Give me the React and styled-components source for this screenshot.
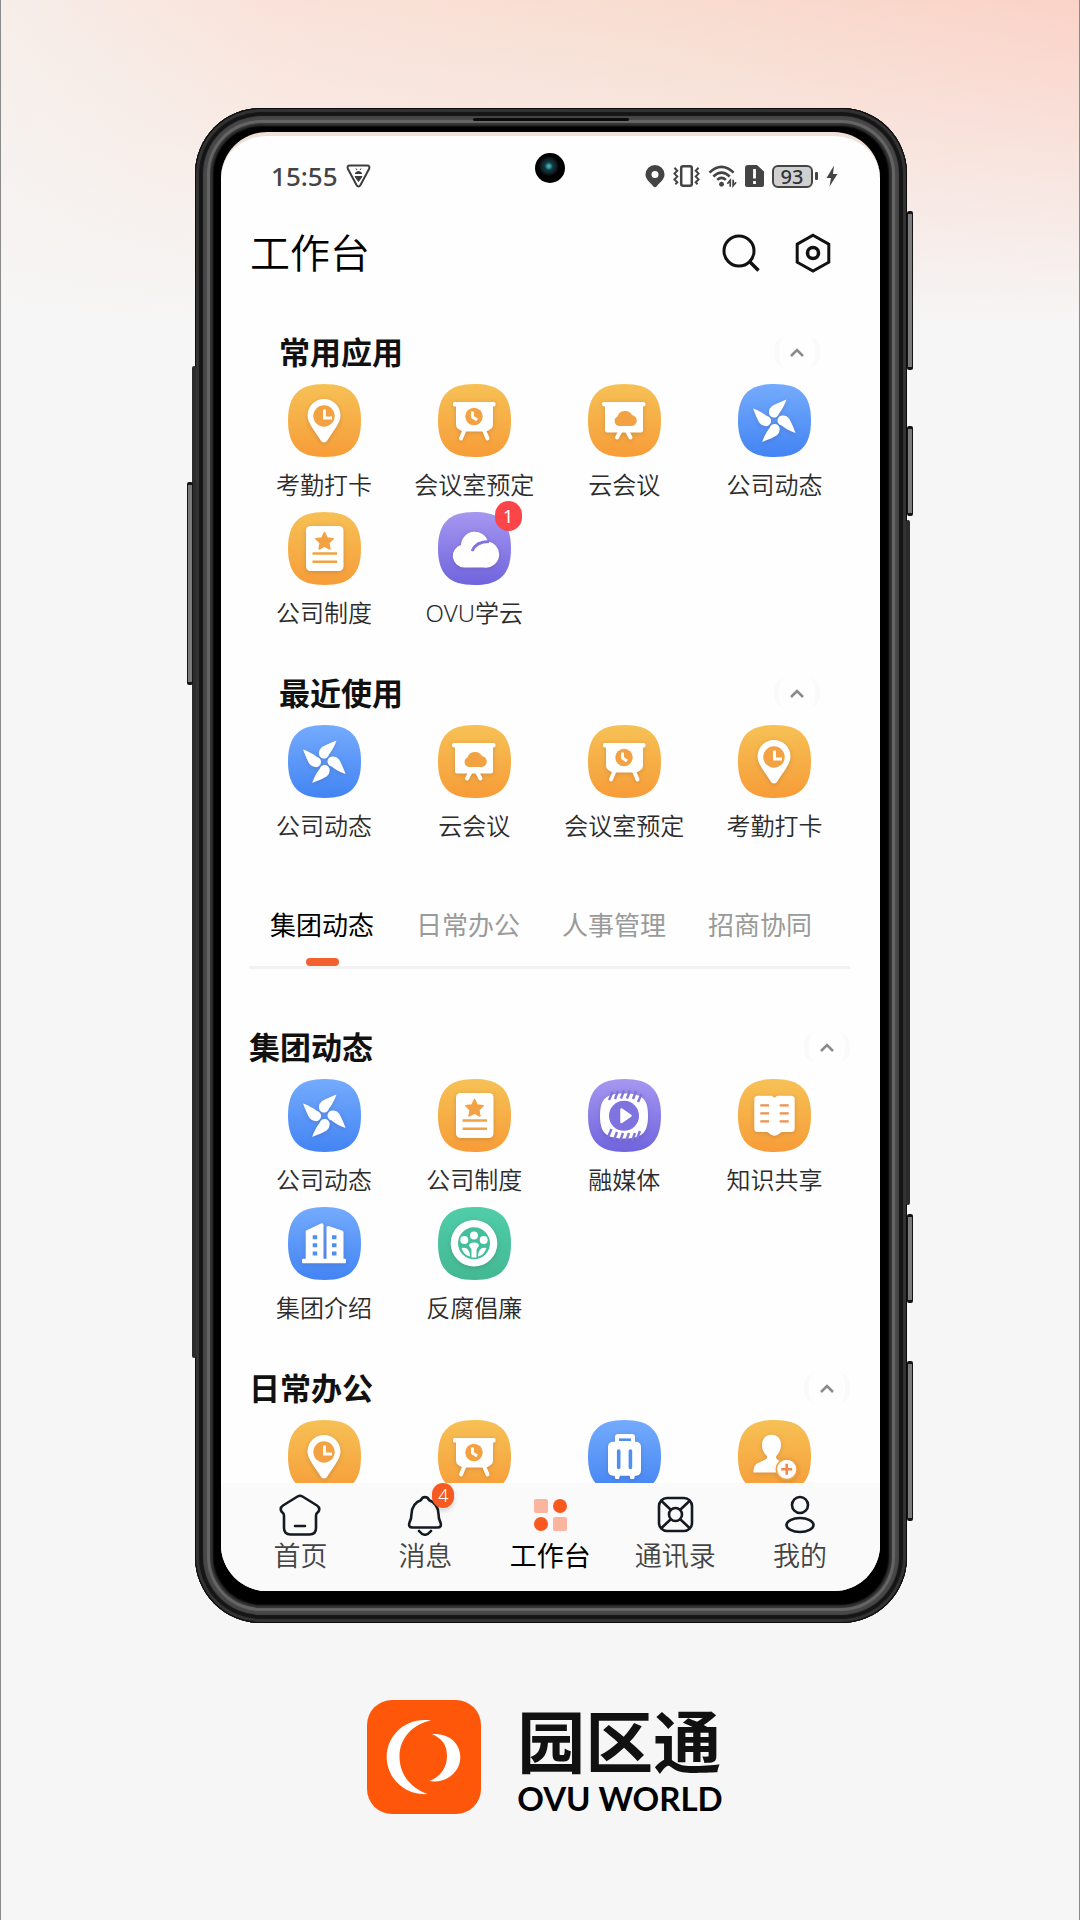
import React from 'react'
import styled, { createGlobalStyle } from 'styled-components'

const TILE_COLORS = {
  orange: ['#f6c155', '#f79c38'],
  blue: ['#74abfd', '#4384f3'],
  purple: ['#a697f0', '#6f64de'],
  green: ['#50cda9', '#43b892'],
}

// colour of the cut-outs inside a white glyph
const CUT_COLORS = {
  orange: '#f3a243',
  blue: '#4f8ff0',
  purple: '#7f73e0',
  green: '#45bf9b',
}

// glyphs are drawn on a 73 x 73 tile, c is the cut-out colour
const GLYPHS = {
  pin: (c) => (
    <>
      <path d="M36 15a16.500 16.500 0 0 0-16.500 16.500c0 8 8.500 17 13.500 25.500q3 3 6 0c5-8.500 13.500-17.500 13.500-25.500A16.500 16.500 0 0 0 36 15z" fill="#fff" />
      <circle cx="36" cy="32" r="10.700" fill={c} />
      <path d="M36.500 25.500V34H44" fill="none" stroke="#fff" strokeWidth="2.800" />
    </>
  ),
  easel: (c) => (
    <>
      <path d="M26.500 46l-3.500 8.500M46 46l3.500 8.500" stroke="#fff" strokeWidth="4" strokeLinecap="round" />
      <rect x="15" y="18" width="42.500" height="4.500" rx="1.500" fill="#fff" />
      <path d="M18 20h37v20q0 4-3 5.500q-2 2-6 2H27q-4 0-6-2q-3-1.500-3-5.500z" fill="#fff" />
      <circle cx="36" cy="32.500" r="8.700" fill={c} />
      <path d="M34.500 27.500v5.500l4.500 3" fill="none" stroke="#fff" strokeWidth="3" />
    </>
  ),
  board: (c) => (
    <>
      <path d="M32.500 47l-3.500 6.500M39 47l3.500 6.500" stroke="#fff" strokeWidth="4" strokeLinecap="round" />
      <rect x="14" y="18" width="43.500" height="4.500" rx="2" fill="#fff" />
      <rect x="17" y="20" width="38" height="28.500" rx="2" fill="#fff" />
      <path d="M31 42a5 5 0 0 1-1.500-9.500a8 8 0 0 1 14.500-1.500a5.500 5.500 0 0 1-1.500 11z" fill={c} />
    </>
  ),
  pinwheel: () => (
    <>
      {[0, 90, 180, 270].map((deg) => (
        <path
          key={deg}
          d="M48.500 15.500Q38 19.500 34 22Q31 24.500 31 27.500A5 5 0 0 0 41 29.500Q45.500 24 48.500 15.500z"
          transform={`rotate(${deg} 36.300 36.800)`}
          fill="#fff"
        />
      ))}
    </>
  ),
  document: (c) => (
    <>
      <rect x="18" y="14" width="37.500" height="45" rx="4.500" fill="#fff" />
      <path
        d="M36.500 20.500l2.700 5.500l6 .8l-4.400 4.200l1.100 6l-5.400-2.900l-5.400 2.900l1.100-6l-4.400-4.200l6-.8z"
        fill={c}
        stroke={c}
        strokeWidth="1.500"
        strokeLinejoin="round"
      />
      <path d="M24.500 41.500H49M24.500 49.700H49" stroke={c} strokeWidth="2.400" />
    </>
  ),
  cloud: (c) => (
    <>
      <path d="M26 55.500a11.500 11.500 0 0 1-3-22.500a13.800 13.800 0 0 1 27-3.500a13 13 0 0 1-4 26z" fill="#fff" />
      <path d="M34 39q4-9.500 17-9.500" fill="none" stroke={c} strokeWidth="2.800" />
    </>
  ),
  film: (c) => (
    <>
      <path d="M36 14.500c18 0 24 5 24 22.300S54 59.500 36 59.500S12 54 12 36.800S18 14.500 36 14.500z" fill="#fff" />
      <path
        d="M21 21l3.500-8M27 20l3-8M33 19.500l3-8M39 19.500l3-8M45 20l3-8M50 23l3.500-8M20 58l3.500-8M26 61l3-8M32 62l3-8M38 62l3-8M44 62l3-8M49 60l3-8"
        stroke={c}
        strokeWidth="2.400"
      />
      <circle cx="36" cy="36.800" r="15" fill={c} />
      <path d="M33.500 30.500v12.500l9-6.200z" fill="#fff" stroke="#fff" strokeWidth="2.500" strokeLinejoin="round" />
    </>
  ),
  book: () => (
    <>
      <path d="M20 16.700h13.500l3 2l3-2H53q3.700 0 3.700 3.500V49.500q0 3.500-3.700 3.500h-8.500q-2 0-3.500 2q-4.500 3.500-9 0q-1.500-2-3.500-2H20q-3.700 0-3.700-3.500V20.200q0-3.500 3.700-3.500z" fill="#fff" />
      <path d="M22.300 26.300H31M22.300 34.300H31M22.300 42.300H31M41.700 26.300h9M41.700 34.300h9M41.700 42.300h9" stroke="#f0904a" strokeWidth="2.300" />
    </>
  ),
  building: (c) => (
    <>
      <path d="M17.700 23.700L33 16.500q2.500-.8 2.500 1.500V54H17.700zM38.500 20.500q0-2 2-1.500L54 23.500q1.500.5 1.500 2V54h-17z" fill="#fff" />
      <rect x="14" y="51.700" width="44" height="4.500" rx="1" fill="#fff" />
      <path d="M24.700 28.300h4.500v4h-4.500zM24.700 36.300h4.500v4h-4.500zM24.700 44.500h4.500v4h-4.500zM44 28.300h4.500v4H44zM44 36.300h4.500v4H44zM44 44.500h4.500v4H44z" fill={c} />
    </>
  ),
  people: (c) => (
    <>
      <circle cx="36" cy="36.300" r="23.300" fill="#fff" />
      <circle cx="36" cy="36.300" r="16" fill={c} />
      <circle cx="36" cy="28.500" r="4" fill="#fff" />
      <circle cx="26.300" cy="33" r="4" fill="#fff" />
      <circle cx="45.700" cy="33" r="4" fill="#fff" />
      <path d="M36 35.500q4.500 0 5 3l-2.500 4V50.500h-5V42.500L31 38.500q.5-3 5-3z" fill="#fff" />
      <path d="M23.500 41q8-2 8.500 8.500q-6-1-8.500-8.500zM48.500 41q-8-2-8.500 8.500q6-1 8.500-8.500z" fill="#fff" />
    </>
  ),
  luggage: (c) => (
    <>
      <rect x="27" y="14" width="20" height="14" rx="3" fill="#fff" />
      <path d="M31 19.700h12" stroke={c} strokeWidth="2.600" />
      <rect x="20" y="21.700" width="33" height="34" rx="5" fill="#fff" />
      <path d="M26 54h6.500l-1.500 5h-3.500zM41 54h6.500L46 59h-3.500z" fill="#fff" />
      <path d="M30.700 31v16.500M42.400 31v16.500" stroke={c} strokeWidth="3.600" strokeLinecap="round" />
    </>
  ),
  invite: (c) => (
    <>
      <path d="M33.500 14.800c7 0 10 5 9.500 11.500c-.4 4.500-2.500 7.500-4.500 9.500q-1.500 3 2 4.500l6 3V52.500H15.500q-.5-7 4.500-9.500l7.500-3.500q2.500-1.500 1-4c-2.500-2-4.300-5.500-4.500-9.200c-.4-6.500 3-11.500 9.500-11.500z" fill="#fff" />
      <circle cx="48.700" cy="49.300" r="11.200" fill={c} />
      <circle cx="48.700" cy="49.300" r="9.500" fill="#fff" />
      <path d="M43.200 49.300h11M48.700 43.800v11" stroke="#f5874a" strokeWidth="2.600" />
    </>
  ),
}

const clockIn = { label: '考勤打卡', glyph: 'pin', tone: 'orange' }
const room = { label: '会议室预定', glyph: 'easel', tone: 'orange' }
const meeting = { label: '云会议', glyph: 'board', tone: 'orange' }
const news = { label: '公司动态', glyph: 'pinwheel', tone: 'blue' }
const rules = { label: '公司制度', glyph: 'document', tone: 'orange' }
const learn = { label: 'OVU学云', glyph: 'cloud', tone: 'purple', badge: 1 }
const media = { label: '融媒体', glyph: 'film', tone: 'purple' }
const share = { label: '知识共享', glyph: 'book', tone: 'orange' }
const about = { label: '集团介绍', glyph: 'building', tone: 'blue' }
const honest = { label: '反腐倡廉', glyph: 'people', tone: 'green' }

// the last row runs under the nav bar, only its icons show
const DAILY = [
  { glyph: 'pin', tone: 'orange' },
  { glyph: 'easel', tone: 'orange' },
  { glyph: 'luggage', tone: 'blue' },
  { glyph: 'invite', tone: 'orange' },
]

const TABS = ['集团动态', '日常办公', '人事管理', '招商协同']

const NAV = [
  {
    label: '首页',
    icon: (
      <path d="M18.500 2.500q2.500-1.500 5 0L38 11.500q3 2 2 5q-.5 1.500-2 2.500q-1 1-1 3v12q0 6.500-6.500 6.500h-19Q5 40.500 5 34V22q0-2-1-3q-1.500-1-2-2.500q-1-3 2-5zM16 32h10" />
    ),
  },
  {
    label: '消息',
    badge: 4,
    icon: (
      <path d="M17 6a4.200 4.200 0 0 1 8 0q9 3.500 9.500 14q0 5 2 8.500q1.500 5-3 5h-25q-4.500 0-3-5q2-3.500 2-8.500Q8 9.500 17 6zM15 37q6 7.500 12 0" />
    ),
  },
  {
    label: '工作台',
    active: true,
    icon: (
      <g stroke="none">
        <rect x="5" y="5" width="14" height="14" rx="2" fill="#fbb59f" />
        <circle cx="31" cy="12" r="7" fill="#f9591f" />
        <circle cx="12" cy="30" r="7" fill="#f9591f" />
        <rect x="24" y="23" width="14" height="14" rx="2" fill="#fbb59f" />
      </g>
    ),
  },
  {
    label: '通讯录',
    icon: (
      <>
        <rect x="5" y="4" width="33" height="33" rx="8" />
        <circle cx="21.500" cy="20.500" r="6.500" />
        <path d="M7.500 7l9 8.500M35.500 7l-9 8.500M7.500 34l9-8.500M35.500 34l-9-8.500" />
      </>
    ),
  },
  {
    label: '我的',
    icon: (
      <>
        <circle cx="21" cy="11" r="8" />
        <ellipse cx="21" cy="31" rx="13.500" ry="7" />
      </>
    ),
  },
]

const AppIcon = ({ glyph, tone }) => {
  const [from, to] = TILE_COLORS[tone]
  return (
    <TileSvg viewBox="0 0 73 73" aria-hidden="true">
      <defs>
        <linearGradient id={`tile-${tone}`} x1="0" y1="0" x2="0" y2="1">
          <stop offset="0" stopColor={from} />
          <stop offset="1" stopColor={to} />
        </linearGradient>
      </defs>
      <path
        d="M36.500 0C62 0 73 11 73 36.500S62 73 36.500 73S0 62 0 36.500S11 0 36.500 0z"
        fill={`url(#tile-${tone})`}
      />
      <g>{GLYPHS[glyph](CUT_COLORS[tone])}</g>
    </TileSvg>
  )
}

const AppSection = ({ title, apps, inset }) => (
  <Section>
    <SectionHead $inset={inset}>
      <SectionTitle>{title}</SectionTitle>
      <CollapseButton aria-label={title}>
        <svg width="14" height="9" viewBox="0 0 14 9" fill="none" stroke="#8a8a8a" strokeWidth="2.500">
          <path d="M1 8l6-6l6 6" />
        </svg>
      </CollapseButton>
    </SectionHead>
    <AppGrid>
      {apps.map((app) => (
        <AppButton key={app.glyph}>
          <AppIconBox>
            <AppIcon glyph={app.glyph} tone={app.tone} />
            {app.badge && <AppBadge>{app.badge}</AppBadge>}
          </AppIconBox>
          {app.label && <AppLabel>{app.label}</AppLabel>}
        </AppButton>
      ))}
    </AppGrid>
  </Section>
)

const StatusIcons = () => (
  <StatusGroup>
    <svg width="20" height="24" viewBox="0 0 20 24" fill="#444">
      <path fillRule="evenodd" d="M10 1a9.500 9.500 0 0 0-9.500 9.500c0 5 4.500 7.500 7.500 11.500q2 2.500 4 0c3-4 7.500-6.500 7.500-11.500A9.500 9.500 0 0 0 10 1zM10 7a3.500 3.500 0 1 1 0 7a3.500 3.500 0 0 1 0-7z" />
    </svg>
    <svg width="27" height="24" viewBox="0 0 28 24" fill="none" stroke="#444" strokeWidth="2">
      <rect x="8.500" y="2" width="11" height="20" rx="2" strokeWidth="2.600" />
      <path d="M1.500 3.500l3 3l-3 3l3 3l-3 3l3 3l-2 2M26.500 3.500l-3 3l3 3l-3 3l3 3l-3 3l2 2" />
    </svg>
    <svg width="29" height="24" viewBox="0 0 30 24" fill="none" stroke="#444" strokeWidth="2.600">
      <path d="M1.500 8.500q12.500-12 25 0M5.500 12.500q8.500-8 17 0M9.500 16q4.500-4 9 0" />
      <circle cx="14" cy="20.500" r="2.500" fill="#444" stroke="none" />
      <path d="M20 20l3-3.500v6.500M26 16v6l3-3.500" strokeWidth="1.800" />
    </svg>
    <svg width="19" height="24" viewBox="0 0 19 24">
      <path d="M3 1h9l7 6.500V21q0 2-2 2H3q-3 0-3-2V4q0-3 3-3z" fill="#444" />
      <path d="M9.500 5v9.500M9.500 17v3" stroke="#fff" strokeWidth="2.800" />
    </svg>
    <Battery>
      <BatteryLevel>93</BatteryLevel>
      <BatteryTip />
    </Battery>
    <svg width="12" height="24" viewBox="0 0 12 24" fill="#444">
      <path d="M8 1.500L0.500 14H5L3.500 22.500L11.500 10H7z" />
    </svg>
  </StatusGroup>
)

const App = () => (
  <Page>
    <GlobalStyle />
    <PhoneWrap>
      <Phone>
        <SideBulge $side="left" $top="17%" $height="65.500%" />
        <SideBulge $side="right" $top="27.200%" $height="45.200%" />
        <SideKey $side="left" $top="24.700%" $height="13.400%" />
        <SideKey $side="right" $top="6.800%" $height="10.500%" />
        <SideKey $side="right" $top="21%" $height="5.900%" />
        <SideKey $side="right" $top="73%" $height="5.900%" />
        <SideKey $side="right" $top="82.700%" $height="10.600%" />
        <Earpiece />
        <Screen>
          <Camera />
          <StatusBar>
            <StatusGroup>
              <Clock>15:55</Clock>
              <svg width="25" height="24" viewBox="0 0 25 24" fill="none" stroke="#3c3c3c" strokeWidth="2">
                <path d="M4 1.500h17q3.500 0 2 3.500l-8.500 16q-2 3-4 0L2 5Q.5 1.500 4 1.500z" />
                <path d="M9 9.500q3.500-4 7 0zM9 12.500h7l-3.500 5zM10 4.500l1 1.500M15 4.500l-1 1.500" fill="#3c3c3c" strokeWidth="1" />
              </svg>
            </StatusGroup>
            <StatusIcons />
          </StatusBar>
          <Header>
            <PageTitle>工作台</PageTitle>
            <HeaderActions>
              <IconButton aria-label="搜索">
                <svg width="40" height="40" viewBox="0 0 40 40" fill="none" stroke="#111" strokeWidth="3">
                  <circle cx="18" cy="18" r="15" />
                  <path d="M28.500 28.500l9 9" strokeWidth="3.500" />
                </svg>
              </IconButton>
              <IconButton aria-label="设置">
                <svg width="40" height="40" viewBox="0 0 40 40" fill="none" stroke="#111" strokeWidth="3">
                  <path d="M20 2.200l15.800 9v18L20 38L4.200 29.200v-18z" />
                  <circle cx="20" cy="20" r="5.500" strokeWidth="3.500" />
                </svg>
              </IconButton>
            </HeaderActions>
          </Header>
          <Content>
            <AppSection inset title="常用应用" apps={[clockIn, room, meeting, news, rules, learn]} />
            <AppSection inset title="最近使用" apps={[news, meeting, room, clockIn]} />
            <TabBar>
              {TABS.map((tab, i) => (
                <Tab key={tab} $active={i === 0}>{tab}</Tab>
              ))}
            </TabBar>
            <AppSection title="集团动态" apps={[news, rules, media, share, about, honest]} />
            <AppSection title="日常办公" apps={DAILY} />
          </Content>
          <NavBar>
            {NAV.map((item) => (
              <NavButton key={item.label} $active={item.active}>
                <NavIconBox>
                  <svg width="42" height="42" viewBox="0 0 42 42" fill="none" stroke="#151a22" strokeWidth="2.600" strokeLinecap="round">
                    {item.icon}
                  </svg>
                  {item.badge && <NavBadge>{item.badge}</NavBadge>}
                </NavIconBox>
                {item.label}
              </NavButton>
            ))}
          </NavBar>
        </Screen>
      </Phone>
    </PhoneWrap>
    <Brand>
      <svg width="114" height="114" viewBox="0 0 114 114">
        <rect width="114" height="114" rx="25" fill="#ff570a" />
        <path d="M64 20.500C38 17 19.700 36 19.700 57S38 96 60.700 94C44 88 32.500 75 32.500 56.500S46 24 64 20.500z" fill="#fff" />
        <path d="M64.700 34C82 33 93.300 43 93.300 57.500S79 84 62.300 81C73 77 80 68 80 56S74 38 64.700 34z" fill="#fff" />
      </svg>
      <BrandText>
        <BrandName>园区通</BrandName>
        <BrandLatin>OVU WORLD</BrandLatin>
      </BrandText>
    </Brand>
  </Page>
)

export default App

const GlobalStyle = createGlobalStyle`
  * {
    box-sizing: border-box;
  }

  body {
    margin: 0;
    font-family: "Noto Sans", "Noto Sans CJK SC", sans-serif;
    color: #111;
  }

  button {
    border: 0;
    padding: 0;
    background: none;
    font: inherit;
    color: inherit;
  }

  svg {
    display: block;
    flex-shrink: 0;
  }
`;

const Page = styled.main`
  min-height: 100vh;
  display: flex;
  flex-direction: column;
  border: 0 solid #8a8a8a;
  border-width: 0 1px;
  padding-bottom: 40px;
  background:
    linear-gradient(to bottom, rgba(246, 246, 246, 0), #f6f6f6 330px),
    linear-gradient(to right, #f6eee9, #fae2d9 25%, #f8ddd0 60%, #fbd2c7);
`;

const PhoneWrap = styled.div`
  padding: 108px 16% 0 18%;
`;

const Phone = styled.div`
  position: relative;
  display: flex;
  aspect-ratio: 712 / 1516;
  padding: 24px 27px 32px 26px;
  border-radius: 66px;
  background: #000;
  box-shadow:
    inset 0 0 0 1px #0c0c0c,
    inset 0 0 1px 4px #333,
    inset 0 0 1px 8px #151515,
    inset 0 0 1px 12px #474747,
    inset 0 0 1px 15px #676767,
    inset 0 0 2px 18px #333;
`;

const SideBulge = styled.span`
  position: absolute;
  ${(p) => p.$side}: -3px;
  top: ${(p) => p.$top};
  width: 4px;
  height: ${(p) => p.$height};
  border-radius: 3px;
  background: #2b2b2b;
`;

const SideKey = styled.span`
  position: absolute;
  ${(p) => p.$side}: ${(p) => (p.$side === 'left' ? '-8px' : '-6px')};
  top: ${(p) => p.$top};
  width: 6px;
  height: ${(p) => p.$height};
  border: 1px solid #151515;
  border-width: 3px 1px;
  border-radius: 2px;
  background: #7b7b7b;
`;

const Earpiece = styled.span`
  position: absolute;
  top: 10px;
  left: 39%;
  right: 39%;
  height: 3px;
  border-radius: 2px;
  background: #0a0a0a;
`;

const Screen = styled.div`
  position: relative;
  flex: 1;
  min-width: 0;
  display: flex;
  flex-direction: column;
  overflow: hidden;
  border-radius: 46px;
  border-top: 4px solid #efe0d8;
  background: #fefefe;
`;

const Camera = styled.span`
  position: absolute;
  top: 17px;
  left: 50%;
  width: 30px;
  height: 30px;
  margin-left: -15px;
  border-radius: 50%;
  background: radial-gradient(circle at 46% 44%, #3fb0b8 0 1px, #123c44 4px, #101a20 8px, #000 10px);
`;

const StatusBar = styled.div`
  display: flex;
  justify-content: space-between;
  align-items: center;
  height: 84px;
  flex-shrink: 0;
  padding: 0 42px 4px 50px;
`;

const StatusGroup = styled.div`
  display: flex;
  align-items: center;
  gap: 8px;
`;

const Clock = styled.span`
  font-size: 26px;
  line-height: 30px;
  font-weight: 500;
  color: #444;
`;

const Battery = styled.span`
  display: flex;
  align-items: center;
  gap: 2px;
`;

const BatteryLevel = styled.span`
  width: 41px;
  height: 23px;
  border: 2px solid #444;
  border-radius: 6px;
  background: #d0d0d0;
  font-size: 20px;
  line-height: 19px;
  font-weight: 500;
  text-align: center;
  color: #333;
`;

const BatteryTip = styled.span`
  width: 3px;
  height: 8px;
  border-radius: 1px;
  background: #444;
`;

const Header = styled.header`
  display: flex;
  justify-content: space-between;
  align-items: center;
  height: 66px;
  flex-shrink: 0;
  padding: 0 47px 0 29px;
`;

const PageTitle = styled.h1`
  margin: 0;
  font-size: 40px;
  line-height: 56px;
  font-weight: 350;
  color: #000;
`;

const HeaderActions = styled.div`
  display: flex;
  gap: 32px;
`;

const IconButton = styled.button`
  width: 40px;
  height: 40px;
`;

const Content = styled.div`
  flex: 1;
  min-height: 0;
  overflow: hidden;
  padding: 2px 30px 0 28px;
`;

const Section = styled.section`
  padding-top: 45px;
`;

const SectionHead = styled.div`
  display: flex;
  justify-content: space-between;
  align-items: center;
  padding: 0 ${(p) => (p.$inset ? '30px' : '0')};
`;

const SectionTitle = styled.h2`
  margin: 0;
  font-size: 31px;
  line-height: 38px;
  font-weight: 700;
`;

const CollapseButton = styled.button`
  display: flex;
  justify-content: center;
  align-items: center;
  width: 46px;
  height: 30px;
  border: 5px solid #fafafa;
  border-width: 0 5px;
  border-radius: 12px;
`;

const AppGrid = styled.div`
  display: grid;
  grid-template-columns: repeat(4, 1fr);
  row-gap: 11px;
  padding-top: 13px;
`;

const AppButton = styled.button`
  display: flex;
  flex-direction: column;
  align-items: center;
  gap: 12px;
`;

const AppIconBox = styled.span`
  position: relative;
`;

const TileSvg = styled.svg`
  width: 73px;
  height: 73px;

  g {
    filter: drop-shadow(0 1px 2px rgba(60, 40, 60, 0.2));
  }
`;

const AppLabel = styled.span`
  font-size: 24px;
  line-height: 32px;
  font-weight: 350;
  white-space: nowrap;
  color: #2c2c2c;
`;

const AppBadge = styled.span`
  position: absolute;
  top: -11px;
  right: -11px;
  width: 27px;
  height: 30px;
  border-radius: 14px;
  background: #fb4548;
  color: #fff;
  font-size: 18px;
  line-height: 30px;
  text-align: center;
`;

const TabBar = styled.nav`
  display: grid;
  grid-template-columns: repeat(4, 146px);
  margin-top: 63px;
  margin-bottom: 14px;
  border-bottom: 3px solid #f2f2f2;
`;

const Tab = styled.button`
  display: flex;
  flex-direction: column;
  align-items: center;
  gap: 13px;
  font-size: 26px;
  line-height: 40px;
  color: ${(p) => (p.$active ? '#000' : '#9a9a9a')};

  &::after {
    content: "";
    width: 33px;
    height: 8px;
    border-radius: 4px;
    background: ${(p) => (p.$active ? '#f2612e' : 'transparent')};
  }
`;

const NavBar = styled.nav`
  display: grid;
  grid-template-columns: repeat(5, 1fr);
  flex-shrink: 0;
  padding: 11px 17px 19px;
  background: #fafafa;
`;

const NavButton = styled.button`
  display: flex;
  flex-direction: column;
  align-items: center;
  gap: 4px;
  font-size: 27px;
  line-height: 32px;
  font-weight: ${(p) => (p.$active ? 400 : 350)};
  color: ${(p) => (p.$active ? '#000' : '#444')};
`;

const NavIconBox = styled.span`
  position: relative;
`;

const NavBadge = styled.span`
  position: absolute;
  top: -11px;
  right: -8px;
  width: 22px;
  height: 25px;
  border-radius: 12px;
  background: #f75a20;
  box-shadow: 0 3px 5px rgba(0, 0, 0, 0.15);
  color: #fff;
  font-size: 18px;
  line-height: 25px;
  text-align: center;
`;

const Brand = styled.footer`
  display: flex;
  justify-content: center;
  gap: 36px;
  padding-top: 77px;
  padding-left: 10px;
`;

const BrandText = styled.div`
  display: flex;
  flex-direction: column;
  gap: 4px;
  padding-top: 8px;
`;

const BrandName = styled.strong`
  font-size: 68px;
  line-height: 68px;
  font-weight: 700;
`;

const BrandLatin = styled.span`
  font-family: Lato, sans-serif;
  font-size: 33px;
  line-height: 36px;
  font-weight: 700;
  white-space: nowrap;
  color: #000;
`;
